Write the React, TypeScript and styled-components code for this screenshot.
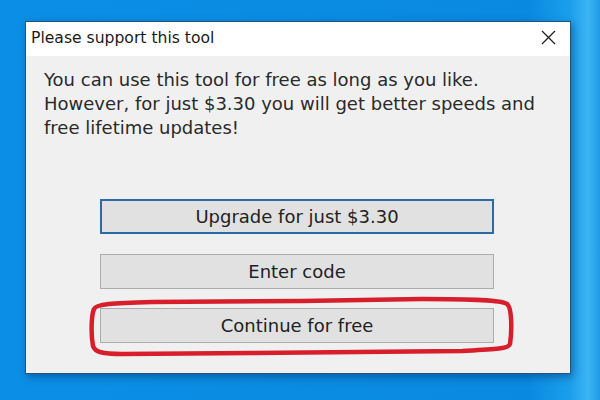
import React from 'react';
import styled, { createGlobalStyle } from 'styled-components';

const GlobalStyle = createGlobalStyle`
  html, body {
    margin: 0;
    padding: 0;
    width: 600px;
    height: 400px;
    overflow: hidden;
  }
  body {
    font-family: "DejaVu Sans", "Open Sans", sans-serif;
  }
`;

const Desktop = styled.div`
  width: 600px;
  height: 400px;
  box-sizing: border-box;
  padding: 21px 0 0 25px;
  background: linear-gradient(90deg, #0b8fe6 0%, #0a89e0 88%, #1b9fec 95%, #3db4f2 98%, #1e9ae8 100%);
`;

const Dialog = styled.div`
  width: 546px;
  height: 353px;
  box-sizing: border-box;
  border: 1px solid #24557e;
  background: #f0f0f0;
  box-shadow: 2px 3px 8px rgba(0, 40, 90, 0.45);
  display: flex;
  flex-direction: column;
`;

const TitleBar = styled.div`
  height: 34px;
  flex: none;
  box-sizing: border-box;
  background: #ffffff;
  display: flex;
  align-items: center;
  justify-content: space-between;
  padding: 0 14px 3px 5px;
`;

const Title = styled.span`
  font-size: 15.6px;
  color: #1a1a1a;
`;

const CloseButton = styled.button`
  border: none;
  background: transparent;
  padding: 0;
  width: 16px;
  height: 16px;
  display: flex;
  align-items: center;
  justify-content: center;
  color: #222;
`;

const Body = styled.div`
  padding: 12px 18px 0 18px;
  display: flex;
  flex-direction: column;
`;

const Message = styled.p`
  margin: 0;
  font-size: 18px;
  line-height: 24px;
  color: #2a2a2a;
  white-space: nowrap;
`;

const ButtonStack = styled.div`
  margin: 59px 0 0 56px;
  width: 394px;
  display: flex;
  flex-direction: column;
  gap: 19.5px;
`;

const ActionButton = styled.button<{ $primary?: boolean }>`
  position: relative;
  height: 35px;
  box-sizing: border-box;
  font-family: "DejaVu Sans", "Open Sans", sans-serif;
  font-size: 18px;
  color: #222;
  background: #e1e1e1;
  border: ${p => (p.$primary ? '2px solid #2a6aa8' : '1px solid #adadad')};
  padding: 0;
  display: flex;
  align-items: center;
  justify-content: center;
`;

const Scribble = styled.svg`
  position: absolute;
  left: -14px;
  top: -14px;
  width: 430px;
  height: 66px;
  pointer-events: none;
`;

export default function App() {
  return (
    <>
      <GlobalStyle />
      <Desktop>
        <Dialog>
          <TitleBar>
            <Title>Please support this tool</Title>
            <CloseButton aria-label="Close">
              <svg width="15" height="15" viewBox="0 0 15 15">
                <path d="M1 1 L14 14 M14 1 L1 14" stroke="#222" strokeWidth="1.3" fill="none" />
              </svg>
            </CloseButton>
          </TitleBar>
          <Body>
            <Message>
              You can use this tool for free as long as you like.
              <br />
              However, for just $3.30 you will get better speeds and
              <br />
              free lifetime updates!
            </Message>
            <ButtonStack>
              <ActionButton $primary>Upgrade for just $3.30</ActionButton>
              <ActionButton>Enter code</ActionButton>
              <ActionButton>
                Continue for free
                <Scribble viewBox="0 0 430 66">
                  <path
                    d="M 65 7 L 215 6 L 335 4 C 385 4, 415 5, 420 9 C 425 12, 425 36, 423 49 C 421 54, 410 54, 375 56 L 165 58 L 35 59 C 15 59, 8 57, 6 51 C 4 41, 4 21, 7 14 C 9 9, 25 8, 65 7 Z"
                    fill="none"
                    stroke="#d81e2b"
                    strokeWidth="4.5"
                    strokeLinejoin="round"
                  />
                </Scribble>
              </ActionButton>
            </ButtonStack>
          </Body>
        </Dialog>
      </Desktop>
    </>
  );
}
